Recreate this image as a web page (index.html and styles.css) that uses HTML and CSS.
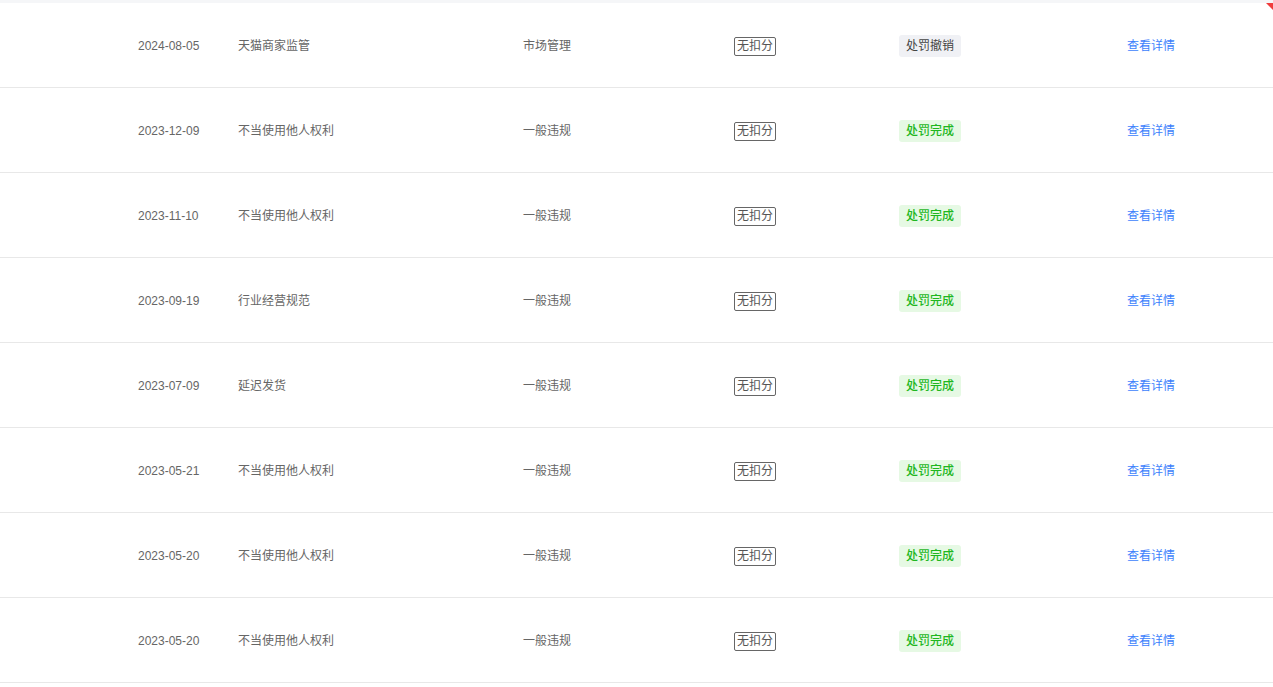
FILE: index.html
```html
<!DOCTYPE html>
<html lang="zh-CN">
<head>
<meta charset="utf-8">
<title>违规记录</title>
<link rel="stylesheet" href="styles.css">
</head>
<body>
<div class="page">
  <div class="topbar"></div>
  <span class="corner"></span>
  <div class="list">
    <div class="row">
      <span class="c-date">2024-08-05</span>
      <span class="c-type">天猫商家监管</span>
      <span class="c-cat">市场管理</span>
      <span class="c-score"><span class="score">无扣分</span></span>
      <span class="c-status"><span class="badge badge-grey">处罚撤销</span></span>
      <span class="c-link"><a class="link">查看详情</a></span>
    </div>
    <div class="row">
      <span class="c-date">2023-12-09</span>
      <span class="c-type">不当使用他人权利</span>
      <span class="c-cat">一般违规</span>
      <span class="c-score"><span class="score">无扣分</span></span>
      <span class="c-status"><span class="badge badge-green">处罚完成</span></span>
      <span class="c-link"><a class="link">查看详情</a></span>
    </div>
    <div class="row">
      <span class="c-date">2023-11-10</span>
      <span class="c-type">不当使用他人权利</span>
      <span class="c-cat">一般违规</span>
      <span class="c-score"><span class="score">无扣分</span></span>
      <span class="c-status"><span class="badge badge-green">处罚完成</span></span>
      <span class="c-link"><a class="link">查看详情</a></span>
    </div>
    <div class="row">
      <span class="c-date">2023-09-19</span>
      <span class="c-type">行业经营规范</span>
      <span class="c-cat">一般违规</span>
      <span class="c-score"><span class="score">无扣分</span></span>
      <span class="c-status"><span class="badge badge-green">处罚完成</span></span>
      <span class="c-link"><a class="link">查看详情</a></span>
    </div>
    <div class="row">
      <span class="c-date">2023-07-09</span>
      <span class="c-type">延迟发货</span>
      <span class="c-cat">一般违规</span>
      <span class="c-score"><span class="score">无扣分</span></span>
      <span class="c-status"><span class="badge badge-green">处罚完成</span></span>
      <span class="c-link"><a class="link">查看详情</a></span>
    </div>
    <div class="row">
      <span class="c-date">2023-05-21</span>
      <span class="c-type">不当使用他人权利</span>
      <span class="c-cat">一般违规</span>
      <span class="c-score"><span class="score">无扣分</span></span>
      <span class="c-status"><span class="badge badge-green">处罚完成</span></span>
      <span class="c-link"><a class="link">查看详情</a></span>
    </div>
    <div class="row">
      <span class="c-date">2023-05-20</span>
      <span class="c-type">不当使用他人权利</span>
      <span class="c-cat">一般违规</span>
      <span class="c-score"><span class="score">无扣分</span></span>
      <span class="c-status"><span class="badge badge-green">处罚完成</span></span>
      <span class="c-link"><a class="link">查看详情</a></span>
    </div>
    <div class="row">
      <span class="c-date">2023-05-20</span>
      <span class="c-type">不当使用他人权利</span>
      <span class="c-cat">一般违规</span>
      <span class="c-score"><span class="score">无扣分</span></span>
      <span class="c-status"><span class="badge badge-green">处罚完成</span></span>
      <span class="c-link"><a class="link">查看详情</a></span>
    </div>
  </div>
</div>
</body>
</html>
```

FILE: styles.css
```css
* { box-sizing: border-box; }
html, body { margin: 0; padding: 0; background: #fff; }
body {
  font-family: "Liberation Sans", "Noto Sans CJK SC", sans-serif;
  font-size: 12px;
  color: #666;
}
.page { position: relative; width: 1273px; height: 687px; overflow: hidden; }
.topbar { height: 3px; background: #f5f6f8; }
.corner {
  position: absolute;
  top: 3px;
  right: 0;
  width: 0;
  height: 0;
  border-top: 7px solid #f03c3c;
  border-left: 7px solid transparent;
}
.list { display: flex; flex-direction: column; }
.row {
  display: grid;
  grid-template-columns: 100px 285px 211px 165px 228px 1fr;
  align-items: center;
  height: 85px;
  padding-left: 138px;
  padding-top: 2px;
  border-bottom: 1px solid #e8e8e8;
  line-height: 18px;
}
.c-date, .c-type, .c-cat { color: #666; }
.score {
  display: inline-block;
  border: 1px solid #666;
  border-radius: 2px;
  padding: 0 2px;
  line-height: 17px;
  color: #555;
}
.badge {
  display: inline-block;
  height: 22px;
  line-height: 22px;
  padding: 0 7px;
  border-radius: 3px;
}
.badge-grey { background: #f0f1f5; color: #444; font-weight: 400; }
.badge-green { background: #e6f9e4; color: #1fb71f; font-weight: 500; }
.link { color: #3d7ffc; cursor: pointer; }
```
